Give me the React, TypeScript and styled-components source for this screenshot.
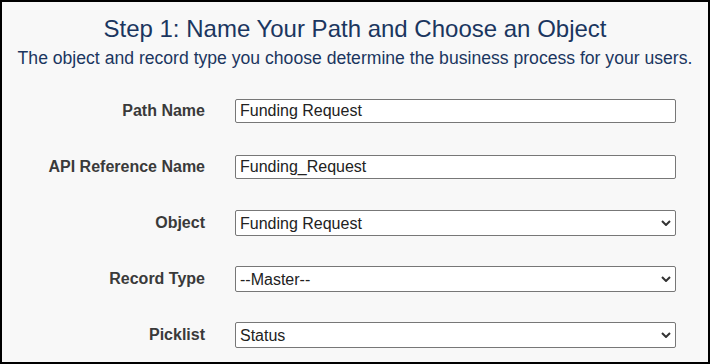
import React from "react";
import styled, { createGlobalStyle } from "styled-components";

const Global = createGlobalStyle`
  html, body { margin: 0; padding: 0; background: #f8f8f8; }
  * { box-sizing: border-box; }
`;

const Frame = styled.div`
  width: 710px;
  height: 364px;
  border: 2px solid #000;
  background: #f8f8f8;
  font-family: "Liberation Sans", Arial, sans-serif;
  display: flex;
  flex-direction: column;
  align-items: stretch;
  padding-top: 12px;
`;

const Title = styled.h1`
  margin: 0;
  text-align: center;
  font-size: 24px;
  font-weight: normal;
  line-height: 30px;
  color: #1b365f;
`;

const Subtitle = styled.p`
  margin: 3px 0 0;
  text-align: center;
  font-size: 17.6px;
  line-height: 22px;
  color: #1b365f;
`;

const Form = styled.div`
  display: grid;
  grid-template-columns: 203px 441px;
  grid-auto-rows: 26px;
  column-gap: 30px;
  row-gap: 30px;
  align-items: center;
  margin-top: 29px;
`;

const Label = styled.label`
  text-align: right;
  font-weight: bold;
  font-size: 16px;
  color: #3a3a3a;
`;

const TextInput = styled.input`
  height: 24px;
  width: 100%;
  margin: 0;
  border: 1px solid #777;
  border-radius: 2px;
  background: #fff;
  padding: 0 4px;
  font-family: "Liberation Sans", Arial, sans-serif;
  font-size: 16px;
  color: #222;
  outline: none;
`;

const SelectWrap = styled.div`
  position: relative;
  width: 100%;
`;

const Select = styled.select`
  appearance: none;
  -webkit-appearance: none;
  height: 26px;
  width: 100%;
  margin: 0;
  border: 1px solid #777;
  border-radius: 2px;
  background: #fff;
  padding: 0 4px;
  font-family: "Liberation Sans", Arial, sans-serif;
  font-size: 16px;
  color: #222;
  outline: none;
`;

const Chevron = styled.svg`
  position: absolute;
  right: 5px;
  top: 50%;
  margin-top: -3px;
  width: 10px;
  height: 6px;
  pointer-events: none;
`;

function Dropdown({ value }: { value: string }) {
  return (
    <SelectWrap>
      <Select defaultValue={value}>
        <option>{value}</option>
      </Select>
      <Chevron viewBox="0 0 10 6">
        <path d="M1 1 L5 5 L9 1" fill="none" stroke="#333" strokeWidth="2" />
      </Chevron>
    </SelectWrap>
  );
}

export default function App() {
  return (
    <>
      <Global />
      <Frame>
        <Title>Step 1: Name Your Path and Choose an Object</Title>
        <Subtitle>
          The object and record type you choose determine the business process for your users.
        </Subtitle>
        <Form>
          <Label>Path Name</Label>
          <TextInput defaultValue="Funding Request" />
          <Label>API Reference Name</Label>
          <TextInput defaultValue="Funding_Request" />
          <Label>Object</Label>
          <Dropdown value="Funding Request" />
          <Label>Record Type</Label>
          <Dropdown value="--Master--" />
          <Label>Picklist</Label>
          <Dropdown value="Status" />
        </Form>
      </Frame>
    </>
  );
}
